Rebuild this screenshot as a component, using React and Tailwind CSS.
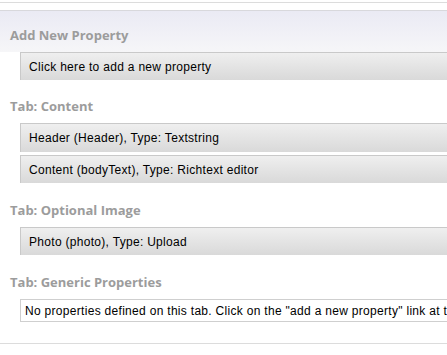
const heading =
  "px-[10px] h-[13px] flex items-center text-[13px] font-bold text-[#9c9c9c] font-['Open_Sans',sans-serif] leading-none";
const rowText =
  "text-[12px] tracking-[0.3px] text-black whitespace-nowrap font-['Liberation_Sans',sans-serif]";

function Item({ children, tall, className = "" }) {
  return (
    <div
      className={`ml-[20px] ${tall ? "h-[29px]" : "h-[28px]"} flex items-center pl-[8px] border-t border-l border-[#c9c9c9] bg-gradient-to-b from-[#efefef] to-[#d9d9d9] ${rowText} ${className}`}
    >
      {children}
    </div>
  );
}

export default function App() {
  return (
    <div className="w-[447px] h-[355px] bg-white overflow-hidden">
      <div className="h-[2px]" />
      <div className="h-px bg-[#dcdcdc]" />
      <div className="h-[7px] bg-white" />
      <div className="h-px bg-[#d8d8dc]" />
      <div className="bg-gradient-to-b from-[#eaeaf4] to-[#f6f6f8] pt-[18px] pb-[10px]">
        <div className={heading}>Add New Property</div>
      </div>
      <Item>Click here to add a new property</Item>

      <div className={heading + " mt-[20px] mb-[10px]"}>Tab: Content</div>
      <Item tall>Header (Header), Type: Textstring</Item>
      <Item className="mt-[3px]">Content (bodyText), Type: Richtext editor</Item>

      <div className={heading + " mt-[21px] mb-[10px]"}>Tab: Optional Image</div>
      <Item>Photo (photo), Type: Upload</Item>

      <div className={heading + " mt-[21px] mb-[10px]"}>Tab: Generic Properties</div>
      <div className={`ml-[20px] h-[23px] flex items-center pl-[4px] border border-r-0 border-[#cfcfcf] bg-white overflow-hidden ${rowText}`}>
        No properties defined on this tab. Click on the "add a new property" link at the top to create a new property.
      </div>
      <div className="mt-[21px] h-px bg-[#dcdcdc]" />
    </div>
  );
}
